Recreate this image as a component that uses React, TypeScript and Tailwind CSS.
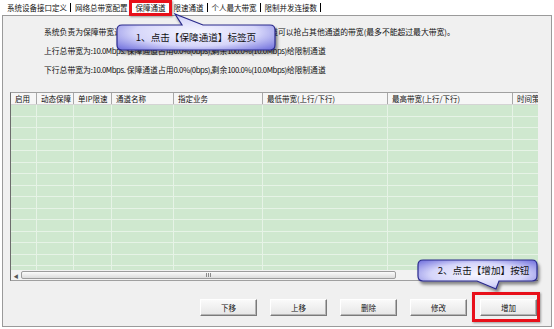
import React from "react";

const tabs = ["系统设备接口定义", "网络总带宽配置", "保障通道", "限速通道", "个人最大带宽", "限制并发连接数"];

const cols = [
  { label: "启用", w: "w-[26px]" },
  { label: "动态保障", w: "w-[37px]" },
  { label: "单IP限速", w: "w-[38px]" },
  { label: "通道名称", w: "w-[62px]" },
  { label: "指定业务", w: "w-[89px]" },
  { label: "最低带宽(上行/下行)", w: "w-[125px]" },
  { label: "最高带宽(上行/下行)", w: "w-[125px]" },
  { label: "时间策略", w: "w-[60px]" },
];

const buttons = ["下移", "上移", "删除", "修改", "增加"];

const rows = Array.from({ length: 15 }, (_, i) => i);

export default function App() {
  return (
    <div className="relative w-[554px] h-[329px] overflow-hidden bg-white font-['Noto_Sans_CJK_SC',sans-serif] text-[#111]">
      {/* tab strip */}
      <div className="flex h-[15px] items-center pl-[7px] text-[7.5px] leading-none">
        {tabs.map((t) => (
          <div key={t} className="flex items-center">
            <span className="whitespace-nowrap">{t}</span>
            <span className="ml-[3px] mr-[4px] h-[9px] border-l border-black" />
          </div>
        ))}
      </div>

      {/* panel */}
      <div className="ml-[2px] flex h-[312px] w-[550px] flex-col border border-[#9a9a9a] bg-[#f0f0f0]">
        <div className="pl-[41px] pt-[6px] text-[7.8px] leading-[19px] whitespace-nowrap">
          <div>系统负责为保障带宽通道优先分配带宽，当有剩余带宽时，保障通道可以抢占其他通道的带宽(最多不能超过最大带宽)。</div>
          <div>
            上行总带宽为<span className="tracking-[-0.45px]">:10.0Mbps. </span>保障通道占用
            <span className="tracking-[-0.45px]">0.0%(0bps),</span>剩余
            <span className="tracking-[-0.45px]">100.0%(10.0Mbps)</span>给限制通道
          </div>
          <div>
            下行总带宽为<span className="tracking-[-0.45px]">:10.0Mbps. </span>保障通道占用
            <span className="tracking-[-0.45px]">0.0%(0bps),</span>剩余
            <span className="tracking-[-0.45px]">100.0%(10.0Mbps)</span>给限制通道
          </div>
        </div>

        {/* table */}
        <div className="ml-[7px] mt-[13px] w-[528px] overflow-hidden border-l border-t border-b border-l-[#6d6d6d] border-t-[#a0a0a0] border-b-[#a0a0a0]">
          <div className="flex h-[12px] border-b border-[#d4d4d4] bg-[#f6f6f6] text-[7.5px] leading-[11px]">
            {cols.map((c) => (
              <div key={c.label} className={`${c.w} shrink-0 overflow-hidden whitespace-nowrap border-r border-[#a8a8a8] pl-[4px]`}>
                {c.label}
              </div>
            ))}
          </div>
          <div className="h-[165px] overflow-hidden bg-[#cfe8cf]">
            {rows.map((r) => (
              <div key={r} className="flex h-[11.5px] border-b border-[#e6f3e6]">
                {cols.map((c) => (
                  <div key={c.label} className={`${c.w} shrink-0 border-r border-[#e6f3e6]`} />
                ))}
              </div>
            ))}
          </div>
          {/* horizontal scrollbar */}
          <div className="flex h-[10px] items-center bg-[#f2f2f2]">
            <div className="flex w-[10px] items-center justify-center text-[5px] leading-none text-[#555]">◀</div>
            <div className="flex h-[8px] w-[375px] items-center justify-center rounded-[2px] border border-[#9c9c9c] bg-gradient-to-b from-[#fbfbfb] to-[#dcdcdc]">
              <div className="flex gap-[1px]">
                <span className="h-[4px] w-px bg-[#8a8a8a]" />
                <span className="h-[4px] w-px bg-[#8a8a8a]" />
                <span className="h-[4px] w-px bg-[#8a8a8a]" />
              </div>
            </div>
            <div className="flex-1" />
            <div className="flex w-[10px] items-center justify-center text-[5px] leading-none text-[#555]">▶</div>
          </div>
        </div>

        {/* buttons */}
        <div className="mt-[18px] flex justify-end gap-[13px] pr-[14px]">
          {buttons.map((b) => (
            <button
              key={b}
              className="flex h-[17px] w-[57px] items-center justify-center border border-l-white border-t-white border-r-[#7a7a7a] border-b-[#7a7a7a] bg-gradient-to-b from-[#fafafa] to-[#e6e6e6] text-[7.5px] leading-none shadow-[inset_-1px_-1px_0_#b4b4b4]"
            >
              {b}
            </button>
          ))}
        </div>
      </div>

      {/* annotation callouts */}
      <svg className="pointer-events-none absolute left-0 top-0" width="554" height="329">
        <defs>
          <radialGradient id="cg" cx="50%" cy="50%" r="65%">
            <stop offset="0%" stopColor="#f6f6ff" />
            <stop offset="60%" stopColor="#d6d6fa" />
            <stop offset="100%" stopColor="#7c7ce0" />
          </radialGradient>
          <filter id="sh" x="-10%" y="-30%" width="130%" height="180%">
            <feDropShadow dx="2" dy="3" stdDeviation="1.5" floodColor="#000" floodOpacity="0.45" />
          </filter>
        </defs>
        <path
          d="M122,25 L182,25 L175,14 L203,25 L270,25 Q275,25 275,30 L275,45 Q275,50 270,50 L122,50 Q117,50 117,45 L117,30 Q117,25 122,25 Z"
          fill="url(#cg)"
          stroke="#2a2a8c"
          strokeWidth="1.2"
          filter="url(#sh)"
        />
        <path
          d="M423,260 L532,260 Q537,260 537,265 L537,276 Q537,281 532,281 L499,281 L496,289 L477,281 L423,281 Q418,281 418,276 L418,265 Q418,260 423,260 Z"
          fill="url(#cg)"
          stroke="#2a2a8c"
          strokeWidth="1.2"
          filter="url(#sh)"
        />
      </svg>
      <div className="absolute left-[117px] top-[25px] flex h-[25px] w-[158px] items-center justify-center text-[9.6px] leading-none">
        1、点击【保障通道】标签页
      </div>
      <div className="absolute left-[418px] top-[260px] flex h-[21px] w-[119px] items-center justify-center pl-[12px] text-[9.6px] leading-none">
        2、点击【增加】按钮
      </div>

      {/* red highlight boxes */}
      <div className="absolute left-[129px] top-0 h-[16px] w-[43px] border-[3px] border-[#e8101a] shadow-[1px_1px_2px_rgba(0,0,0,0.35)]" />
      <div className="absolute left-[472px] top-[292px] h-[30px] w-[68px] border-[3px] border-[#e8101a] shadow-[1px_1px_2px_rgba(0,0,0,0.35)]" />
    </div>
  );
}
